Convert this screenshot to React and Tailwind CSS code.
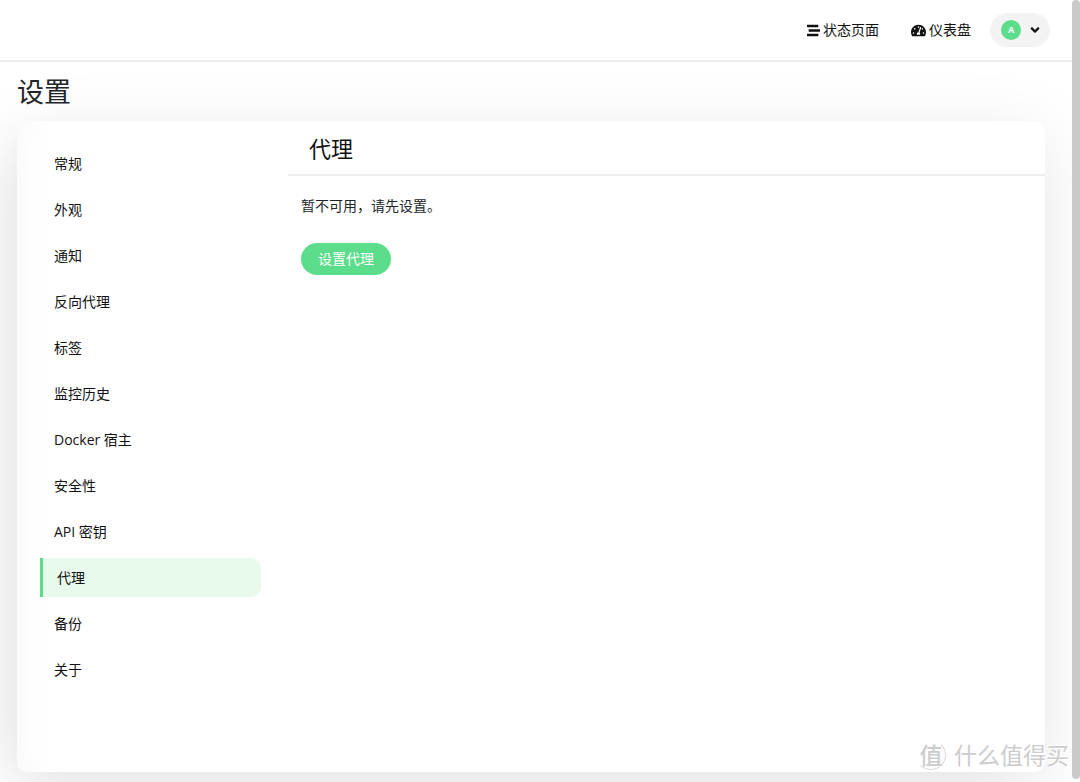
import React, { useState } from 'react'
import { FaStream, FaTachometerAlt, FaAngleDown } from 'react-icons/fa'

const MENU = [
  '常规',
  '外观',
  '通知',
  '反向代理',
  '标签',
  '监控历史',
  'Docker 宿主',
  '安全性',
  'API 密钥',
  '代理',
  '备份',
  '关于',
]

function Header() {
  return (
    <header className="relative z-10 flex items-center justify-end h-[62px] pr-[22px] bg-white border-b-2 border-[#eeeeee] flex-shrink-0">
      <nav className="flex items-center">
        <a href="#status" className="flex items-center gap-[3px] mr-8">
          <FaStream className="w-[13px] h-[13px]" />
          状态页面
        </a>
        <a href="#dashboard" className="flex items-center gap-[3px] mr-[19px]">
          <FaTachometerAlt className="w-[15px] h-[15px]" />
          仪表盘
        </a>
      </nav>
      <button
        type="button"
        aria-label="用户菜单"
        className="flex items-center justify-between w-[60px] h-[34px] pl-[11px] pr-2 rounded-full bg-[#f3f3f3]"
      >
        <span className="flex items-center justify-center w-5 h-5 rounded-full bg-[#5cdd8b] text-white text-[9px] font-bold">A</span>
        <FaAngleDown className="w-3.5 h-3.5" />
      </button>
    </header>
  )
}

function Menu({ current, onSelect }) {
  return (
    <nav className="flex flex-col gap-[7px] w-[221px] ml-[23px] mr-[27px] pt-[23px] flex-shrink-0">
      {MENU.map((label) => (
        <a
          key={label}
          href="#settings"
          onClick={(e) => { e.preventDefault(); onSelect(label) }}
          className={`flex items-center h-[39px] pl-3.5 ${label === current ? 'border-l-[3px] border-[#5cdd8b] bg-[#e7faec] rounded-r-[10px]' : 'rounded-[10px]'}`}
        >
          {label}
        </a>
      ))}
    </nav>
  )
}

// Site stamp over the lower right corner
function Watermark() {
  return (
    <div className="absolute right-[11px] bottom-[11px] z-20 flex items-center gap-2 text-[#cccccc] pointer-events-none [text-shadow:1px_1px_1px_#fff,-1px_-1px_1px_#fff]">
      <span className="flex items-center justify-center w-[30px] h-[30px] rounded-full border border-[#d4d4d4] border-l-transparent border-t-transparent text-[23px] leading-6 font-medium">值</span>
      <span className="text-[23px] leading-8">什么值得买</span>
    </div>
  )
}

export default function App() {
  const [current, setCurrent] = useState('代理')

  return (
    <div
      className="relative flex h-screen overflow-hidden bg-white text-sm text-[#111111]"
      style={{ fontFamily: '"Open Sans", "Noto Sans CJK SC", sans-serif' }}
    >
      <div className="flex flex-col flex-1 min-w-0">
        <Header />
        <main className="flex flex-col flex-1 min-h-0 pl-[17px] pr-[27px] pb-2.5">
          <h1 className="relative z-10 mt-3 mb-3 text-[27px] leading-[35px] text-[#212529]">设置</h1>
          <div className="flex flex-1 min-h-0 rounded-[10px] bg-white shadow-[0_15px_70px_rgba(0,0,0,0.1),-40px_15px_60px_-20px_rgba(0,0,0,0.04),inset_30px_0_40px_-30px_rgba(0,0,0,0.04)]">
            <Menu current={current} onSelect={setCurrent} />
            <section className="flex-1 min-w-0">
              <h2 className="h-[55px] pl-[21px] text-[22px] leading-[55px] border-b-2 border-[#eeeeee]">{current}</h2>
              <div className="pl-[13px] pt-5">
                <p className="leading-5 text-[#212529]">暂不可用，请先设置。</p>
                <button type="button" className="mt-[27px] h-8 w-[90px] rounded-full bg-[#5cdd8b] text-white">设置代理</button>
              </div>
            </section>
          </div>
        </main>
      </div>
      <div className="relative z-10 w-2 flex-shrink-0 pb-[3px] bg-white">
        <div className="h-full rounded-full bg-[#cacaca]" />
      </div>
      <Watermark />
    </div>
  )
}
